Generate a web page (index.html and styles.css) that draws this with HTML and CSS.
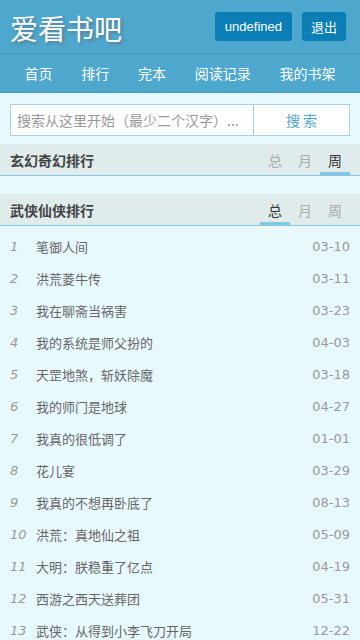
FILE: index.html
```html
<!DOCTYPE html>
<html lang="zh">
<head>
<meta charset="utf-8">
<title>爱看书吧</title>
<link rel="stylesheet" href="styles.css">
</head>
<body>
<header class="top">
  <div class="logo">爱看书吧</div>
  <div class="actions">
    <a class="btn">undefined</a>
    <a class="btn">退出</a>
  </div>
</header>
<nav class="nav">
  <a>首页</a><a>排行</a><a>完本</a><a>阅读记录</a><a>我的书架</a>
</nav>
<form class="search">
  <div class="search-input">搜索从这里开始（最少二个汉字）...</div>
  <div class="search-btn">搜 索</div>
</form>
<section class="rank">
  <div class="rank-head">
    <h2>玄幻奇幻排行</h2>
    <div class="tabs"><span>总</span><span>月</span><span class="on">周</span></div>
  </div>
</section>
<section class="rank">
  <div class="rank-head">
    <h2>武侠仙侠排行</h2>
    <div class="tabs"><span class="on">总</span><span>月</span><span>周</span></div>
  </div>
  <ol class="list">
    <li><i>1</i><span class="t">笔御人间</span><span class="d">03-10</span></li>
    <li><i>2</i><span class="t">洪荒菱牛传</span><span class="d">03-11</span></li>
    <li><i>3</i><span class="t">我在聊斋当祸害</span><span class="d">03-23</span></li>
    <li><i>4</i><span class="t">我的系统是师父扮的</span><span class="d">04-03</span></li>
    <li><i>5</i><span class="t">天罡地煞，斩妖除魔</span><span class="d">03-18</span></li>
    <li><i>6</i><span class="t">我的师门是地球</span><span class="d">04-27</span></li>
    <li><i>7</i><span class="t">我真的很低调了</span><span class="d">01-01</span></li>
    <li><i>8</i><span class="t">花儿宴</span><span class="d">03-29</span></li>
    <li><i>9</i><span class="t">我真的不想再卧底了</span><span class="d">08-13</span></li>
    <li><i>10</i><span class="t">洪荒：真地仙之祖</span><span class="d">05-09</span></li>
    <li><i>11</i><span class="t">大明：朕稳重了亿点</span><span class="d">04-19</span></li>
    <li><i>12</i><span class="t">西游之西天送葬团</span><span class="d">05-31</span></li>
    <li><i>13</i><span class="t">武侠：从得到小李飞刀开局</span><span class="d">12-22</span></li>
  </ol>
</section>
</body>
</html>
```

FILE: styles.css
```css
* { box-sizing: border-box; margin: 0; padding: 0; }
html, body { background: #e8f9fe; }
body {
  font-family: "DejaVu Sans", "Noto Sans CJK SC", sans-serif;
  font-size: 13px;
  color: #555;
}
a { text-decoration: none; color: inherit; }

.top {
  height: 54px;
  background: #4ea7cc;
  border-bottom: 1px solid #3f98bf;
  display: flex;
  align-items: center;
  justify-content: space-between;
  padding: 0 14px 0 10px;
}
.logo {
  font-family: "Noto Sans CJK SC", sans-serif;
  font-size: 28px;
  line-height: 1;
  color: #fff;
  text-shadow: 2px 2px 3px #5a7f90;
  margin-top: 2px;
}
.actions { display: flex; gap: 10px; }
.btn {
  height: 29px;
  line-height: 29px;
  padding: 0 10px;
  background: #0a7eb5;
  border-radius: 3px;
  color: #fff;
  font-family: "Liberation Sans", "Noto Sans CJK SC", sans-serif;
  font-size: 13px;
}
.btn:last-child { font-family: "Noto Sans CJK SC", sans-serif; font-size: 13px; padding: 0 9px; }

.nav {
  height: 39px;
  background: #4ea7cc;
  border-bottom: 1px solid #3f98bf;
  display: flex;
  justify-content: space-around;
  align-items: center;
  padding: 0 10px;
}
.nav a {
  font-family: "Noto Sans CJK SC", sans-serif;
  color: #fff;
  font-size: 14px;
}

.search {
  margin: 11px 10px 8px;
  height: 32px;
  display: flex;
  border: 1px solid #a0d3e6;
  background: #fff;
}
.search-input {
  width: 243px;
  border-right: 1px solid #a0d3e6;
  padding: 0 6px;
  line-height: 30px;
  font-family: "Noto Sans CJK SC", sans-serif;
  font-size: 14px;
  color: #999;
  white-space: nowrap;
  overflow: hidden;
  text-overflow: ellipsis;
}
.search-btn {
  flex: 1;
  text-align: center;
  line-height: 30px;
  font-family: "Noto Sans CJK SC", sans-serif;
  font-size: 14px;
  color: #4ea7cc;
}

.rank { margin-bottom: 18px; }
.rank:last-child { margin-bottom: 0; }
.rank-head {
  height: 32px;
  background: #e0ecec;
  border-bottom: 1px solid #86c6e2;
  display: flex;
  align-items: center;
  justify-content: space-between;
  padding: 0 10px;
}
.rank-head h2 {
  font-family: "Noto Sans CJK SC", sans-serif;
  font-size: 14px;
  font-weight: bold;
  color: #444;
}
.tabs { display: flex; align-self: stretch; }
.tabs span {
  width: 30px;
  display: flex;
  align-items: center;
  justify-content: center;
  font-family: "Noto Sans CJK SC", sans-serif;
  font-size: 14px;
  color: #aaa;
  border-bottom: 3px solid transparent;
  padding-top: 3px;
}
.tabs span.on { color: #333; border-bottom-color: #86c6e2; }

.list { list-style: none; padding-top: 4px; }
.list li {
  height: 32px;
  display: flex;
  align-items: center;
  padding: 0 10px;
}
.list i {
  width: 26px;
  color: #999;
  font-size: 13px;
}
.list .t {
  flex: 1;
  font-family: "Noto Sans CJK SC", sans-serif;
  font-size: 13px;
  color: #666;
}
.list .d { color: #999; font-size: 13px; }
```
